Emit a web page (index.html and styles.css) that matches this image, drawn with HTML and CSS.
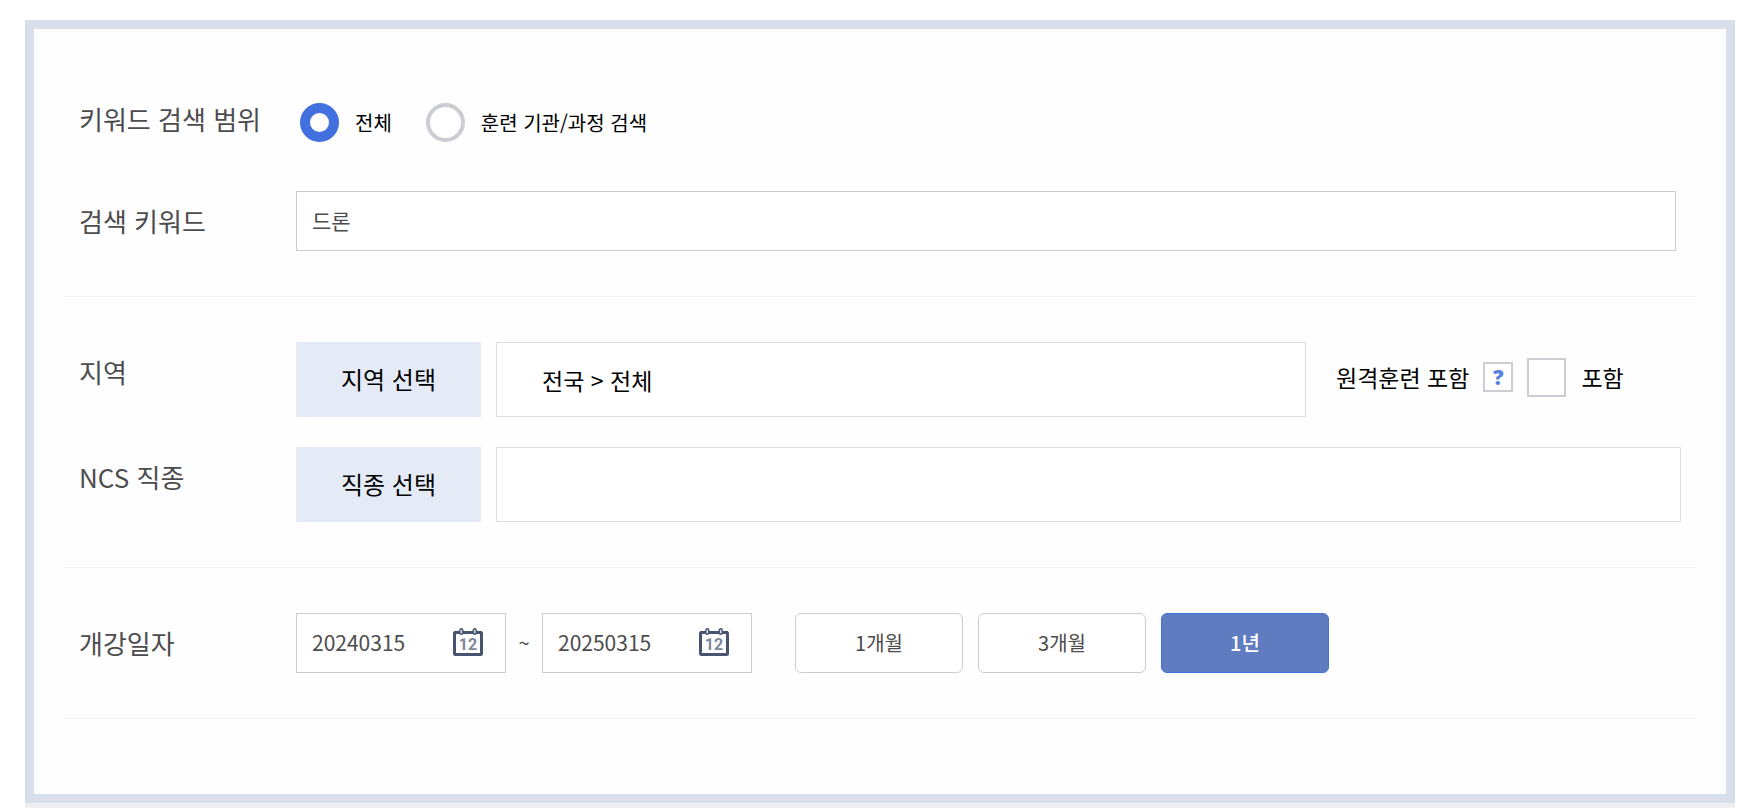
FILE: index.html
```html
<!DOCTYPE html>
<html lang="ko">
<head>
    <meta charset="UTF-8">
    <meta name="viewport" content="width=device-width, initial-scale=1.0">
    <title>훈련과정 검색</title>
    <link rel="stylesheet" href="styles.css">
</head>
<body>
    <form class="search-panel">
        <div class="section section-first">
            <div class="row" role="radiogroup" aria-labelledby="scopeLabel">
                <span class="row-label label-scope" id="scopeLabel">키워드 검색 범위</span>
                <div class="radio-group">
                    <label class="radio"><input type="radio" name="scope" value="all" checked>전체</label>
                    <label class="radio"><input type="radio" name="scope" value="course">훈련 기관/과정 검색</label>
                </div>
            </div>
            <div class="row">
                <label class="row-label" for="keyword">검색 키워드</label>
                <input class="keyword" type="text" id="keyword" value="드론">
            </div>
        </div>

        <div class="section">
            <div class="row">
                <label class="row-label label-tall" for="region">지역</label>
                <div class="picker">
                    <button type="button" class="select-button">지역 선택</button>
                    <input class="picked" type="text" id="region" value="전국 &gt; 전체" readonly>
                    <div class="remote">
                        <span>원격훈련 포함</span>
                        <button type="button" class="help" aria-label="도움말">?</button>
                        <label class="check"><input type="checkbox" id="remote">포함</label>
                    </div>
                </div>
            </div>
            <div class="row">
                <label class="row-label label-tall" for="job">NCS 직종</label>
                <div class="picker">
                    <button type="button" class="select-button">직종 선택</button>
                    <input class="picked" type="text" id="job" readonly>
                </div>
            </div>
        </div>

        <div class="section">
            <div class="row">
                <label class="row-label" for="startDate">개강일자</label>
                <div class="dates">
                    <div class="date-box">
                        <input type="text" id="startDate" value="20240315">
                        <button type="button" class="calendar" aria-label="시작일 선택">
                            <svg width="30" height="28" viewBox="0 0 30 28">
                                <rect x="1.5" y="4.5" width="27" height="22" rx="1" fill="#fff" stroke="#48546f" stroke-width="3"/>
                                <path d="M1 4.5h28" stroke="#48546f" stroke-width="3"/>
                                <rect x="6.8" y="0.8" width="3" height="5.4" rx="1.5" fill="#d5d9e1" stroke="#48546f" stroke-width="1.4"/>
                                <rect x="20.2" y="0.8" width="3" height="5.4" rx="1.5" fill="#d5d9e1" stroke="#48546f" stroke-width="1.4"/>
                                <text x="15" y="22" text-anchor="middle">12</text>
                            </svg>
                        </button>
                    </div>
                    <span class="tilde">~</span>
                    <div class="date-box">
                        <input type="text" id="endDate" value="20250315" aria-label="종료일">
                        <button type="button" class="calendar" aria-label="종료일 선택">
                            <svg width="30" height="28" viewBox="0 0 30 28">
                                <rect x="1.5" y="4.5" width="27" height="22" rx="1" fill="#fff" stroke="#48546f" stroke-width="3"/>
                                <path d="M1 4.5h28" stroke="#48546f" stroke-width="3"/>
                                <rect x="6.8" y="0.8" width="3" height="5.4" rx="1.5" fill="#d5d9e1" stroke="#48546f" stroke-width="1.4"/>
                                <rect x="20.2" y="0.8" width="3" height="5.4" rx="1.5" fill="#d5d9e1" stroke="#48546f" stroke-width="1.4"/>
                                <text x="15" y="22" text-anchor="middle">12</text>
                            </svg>
                        </button>
                    </div>
                    <div class="periods">
                        <button type="button" class="period">1개월</button>
                        <button type="button" class="period">3개월</button>
                        <button type="button" class="period active">1년</button>
                    </div>
                </div>
            </div>
        </div>
    </form>
    <div class="result-area"></div>

    <script>
        const periods = document.querySelectorAll('.period');

        periods.forEach(button => {
            button.addEventListener('click', () => {
                periods.forEach(item => item.classList.remove('active'));
                button.classList.add('active');
            });
        });
    </script>
</body>
</html>
```
FILE: styles.css
```css
* {
    box-sizing: border-box;
}

body {
    margin: 0;
    padding: 20px 9px 0 25px;
    background: #fff;
    color: #000;
    font-family: 'Noto Sans CJK KR', sans-serif;
    font-size: 20px;
    line-height: 30px;
}

button,
input {
    margin: 0;
    padding: 0;
    font-family: inherit;
    font-size: inherit;
    color: inherit;
}

button {
    cursor: pointer;
}

.search-panel {
    padding: 29px 30px 75px;
    border: 9px solid #d8deea;
    background: #fefefe;
}

.section {
    display: flex;
    flex-direction: column;
    gap: 30px;
    padding: 45px 15px;
    border-bottom: 1px solid #f2f2f3;
}

.section-first {
    gap: 49px;
    padding-right: 20px;
}

.row {
    display: grid;
    grid-template-columns: 217px 1fr;
    align-items: center;
}

.row-label {
    color: #4c4c4e;
    font-size: 26px;
}

.label-scope {
    padding-bottom: 8px;
}

.label-tall {
    padding-bottom: 15px;
}

/* search scope */
.radio-group {
    display: flex;
    gap: 34px;
    padding-left: 4px;
}

.radio {
    display: flex;
    align-items: center;
    gap: 16px;
}

.radio input {
    appearance: none;
    width: 39px;
    height: 39px;
    border: 4px solid #cccdd2;
    border-radius: 50%;
    background: #fff;
}

.radio input:checked {
    border: 10px solid #4271df;
}

.keyword {
    width: 100%;
    height: 60px;
    padding: 0 15px 2px;
    border: 1px solid #ccc;
    background: #fff;
    color: #4c4c4e;
    font-size: 21px;
}

/* region and job */
.picker {
    display: flex;
    gap: 15px;
    font-size: 23px;
}

.select-button {
    width: 185px;
    height: 75px;
    padding-bottom: 2px;
    border: none;
    background: #e4ebf7;
    font-size: 24px;
}

.picked {
    flex: 1;
    min-width: 0;
    height: 75px;
    padding: 0 45px;
    border: 1px solid #ddd;
    background: #fff;
}

.remote {
    display: flex;
    align-items: center;
    gap: 14px;
    width: 360px;
    padding: 0 0 5px 15px;
}

.help {
    width: 30px;
    height: 30px;
    border: 2px solid #cdced3;
    background: #fff;
    color: #5480e6;
    font-family: 'Open Sans', sans-serif;
    font-size: 21px;
    font-weight: 800;
    line-height: 26px;
}

.check {
    display: flex;
    align-items: center;
    gap: 15px;
}

.check input {
    appearance: none;
    width: 39px;
    height: 39px;
    border: 2px solid #cccdd2;
    background: #fff;
}

.check input:checked {
    background: #4271df;
}

/* start date */
.dates {
    display: flex;
    align-items: center;
    color: #4c4c4e;
}

.date-box {
    display: flex;
    align-items: center;
    width: 210px;
    height: 60px;
    padding: 0 22px 2px 15px;
    border: 1px solid #cccdd2;
    background: #fff;
    font-size: 21px;
}

.date-box input {
    flex: 1;
    min-width: 0;
    border: none;
    background: none;
}

.calendar {
    display: flex;
    border: none;
    background: none;
}

.calendar text {
    fill: #808799;
    font-family: Roboto, sans-serif;
    font-size: 16px;
    font-weight: bold;
}

.tilde {
    width: 36px;
    text-align: center;
}

.periods {
    display: flex;
    gap: 15px;
    margin-left: 43px;
}

.period {
    width: 168px;
    height: 60px;
    padding-bottom: 2px;
    border: 1px solid #cccdd2;
    border-radius: 6px;
    background: #fff;
}

.period.active {
    border-color: #4271df;
    background: #5f7cc0;
    color: #fff;
    font-weight: 500;
}

.result-area {
    height: 5px;
    background: #efeff2;
}
```
